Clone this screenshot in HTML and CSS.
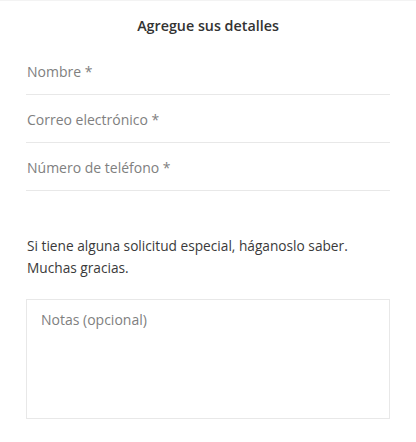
FILE: index.html
```html
<!DOCTYPE html>
<html lang="es">
<head>
  <meta charset="UTF-8" />
  <title>Agregue sus detalles</title>
  <link rel="stylesheet" href="styles.css">
</head>
<body>

  <div class="details">
    <h1>Agregue sus detalles</h1>

    <form class="fields">
      <input type="text" class="field" placeholder="Nombre *" />
      <input type="email" class="field" placeholder="Correo electrónico *" />
      <input type="tel" class="field" placeholder="Número de teléfono *" />

      <p class="note">Si tiene alguna solicitud especial, háganoslo saber. Muchas gracias.</p>

      <textarea class="notes" placeholder="Notas (opcional)"></textarea>
    </form>
  </div>

</body>
</html>
```

FILE: styles.css
```css
body {
  margin: 0;
  font-family: "Open Sans", sans-serif;
  color: #3a3a3a;
  background: #fff;
}
.details {
  border-top: 1px solid #f3f3f3;
  padding: 0 26px;
}
h1 {
  font-size: 14.3px;
  font-weight: 600;
  text-align: center;
  color: #333;
  margin: 0;
  padding: 14px 0 10px;
  line-height: 22px;
}
.fields {
  display: flex;
  flex-direction: column;
}
.field {
  height: 48px;
  box-sizing: border-box;
  border: none;
  border-bottom: 1px solid #e8e8e8;
  padding: 2px 1px 0;
  font-family: inherit;
  font-size: 14px;
  color: #333;
  outline: none;
}
.field::placeholder,
.notes::placeholder {
  color: #808080;
}
.note {
  font-size: 13.7px;
  line-height: 22px;
  margin: 44px 0 20px 1px;
}
.notes {
  height: 120px;
  box-sizing: border-box;
  border: 1px solid #e8e8e8;
  padding: 10px 14px;
  font-family: inherit;
  font-size: 14px;
  resize: none;
  outline: none;
}
```
